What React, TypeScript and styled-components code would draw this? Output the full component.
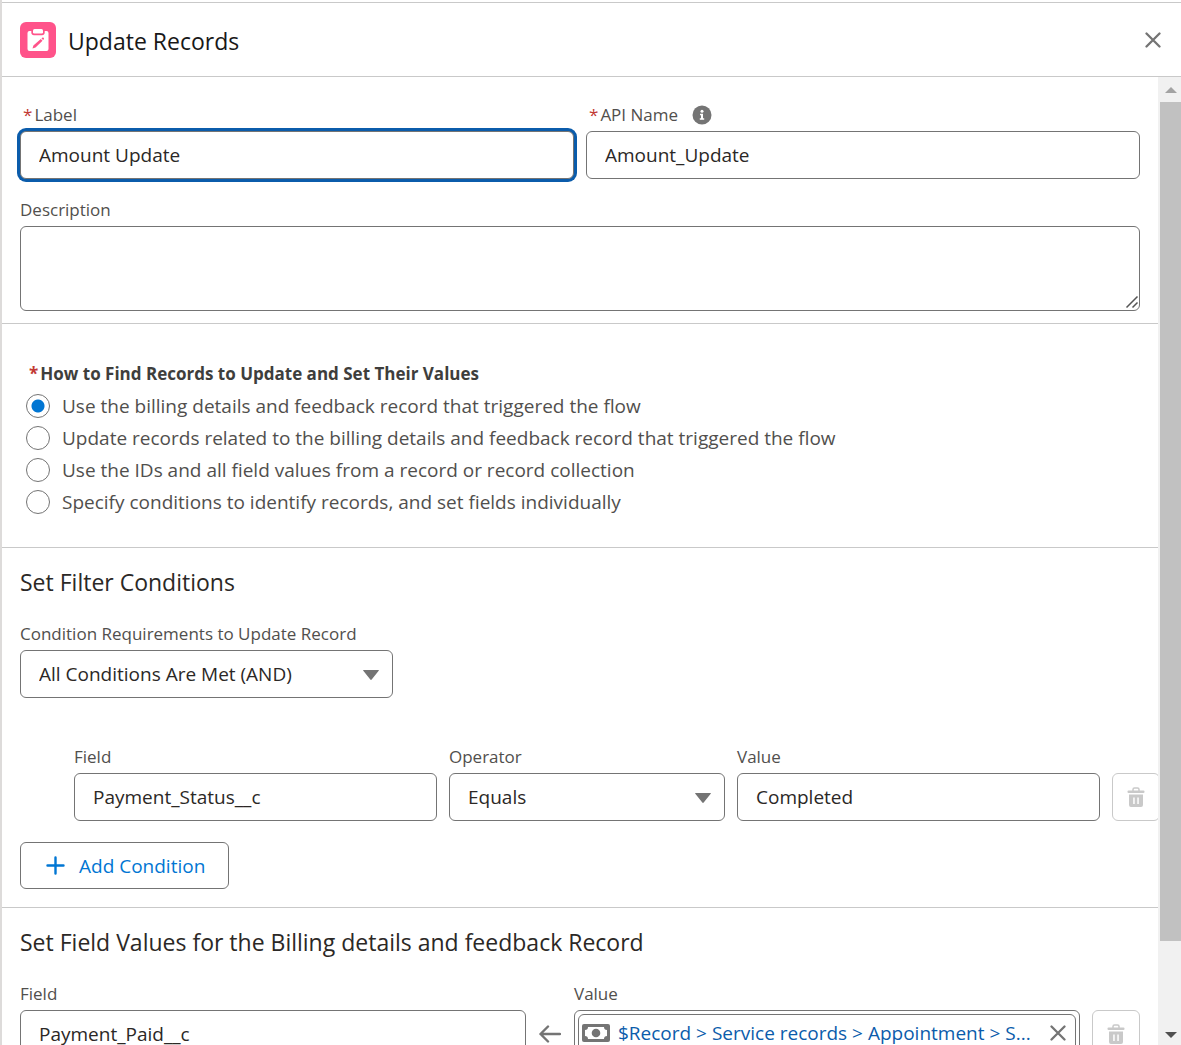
import React, { useState } from "react";
import styled, { createGlobalStyle, css } from "styled-components";

const GlobalStyle = createGlobalStyle`
  *, *::before, *::after { box-sizing: border-box; }
  body { margin: 0; background: #fff; overflow: hidden; }
  body, button, input, select, textarea {
    font-family: "Open Sans", "Noto Sans", sans-serif;
  }
`;

const Panel = styled.main`
  display: flex;
  flex-direction: column;
  height: 100vh;
  padding-top: 2px;
  border-left: 2px solid #dddbda;
  color: #444;
`;

const Header = styled.header`
  display: flex;
  align-items: center;
  gap: 12px;
  flex: none;
  height: 75px;
  padding: 0 18px;
  border-top: 1px solid #c9c9c9;
  border-bottom: 1px solid #c9c9c9;
`;

const Badge = styled.span`
  display: grid;
  place-items: center;
  width: 36px;
  height: 36px;
  border-radius: 6px;
  background: #ff538a;
`;

const Title = styled.h1`
  flex: 1;
  margin: 0;
  padding-top: 2px;
  color: #181818;
  font-size: 23px;
  line-height: 28px;
  font-weight: 400;
`;

const IconButton = styled.button`
  display: grid;
  place-items: center;
  flex: none;
  width: 20px;
  height: 24px;
  padding: 0;
  border: 0;
  background: none;
  color: #747474;
`;

const Body = styled.div`
  display: flex;
  flex: 1;
  min-height: 0;
`;

const Content = styled.form`
  flex: 1;
  min-width: 0;
  overflow-x: hidden;
  overflow-y: auto;
  scrollbar-width: none;
`;

const Section = styled.section<{ $top: number; $bottom: number }>`
  padding: ${(p) => p.$top}px 18px ${(p) => p.$bottom}px;
  border-bottom: 1px solid #c9c9c9;
`;

const Heading = styled.h2`
  margin: 0 0 27px;
  color: #2b2826;
  font-size: 23px;
  line-height: 28px;
  font-weight: 400;
`;

const TwoColumns = styled.div`
  display: grid;
  grid-template-columns: 1fr 1fr;
  gap: 12px;
  margin-bottom: 20px;
`;

const Field = styled.div`
  display: flex;
  flex-direction: column;
  gap: 5px;
  min-width: 0;
`;

const LabelRow = styled.div<{ $required?: boolean }>`
  display: flex;
  align-items: center;
  gap: 14px;
  height: 22px;
  padding-left: ${(p) => (p.$required ? 3 : 0)}px;
`;

const Label = styled.label`
  color: #514f4d;
  font-size: 17px;
  line-height: 22px;
  white-space: nowrap;
`;

const Star = styled.abbr`
  margin-right: 2px;
  color: #c23934;
  text-decoration: none;
`;

const box = css`
  width: 100%;
  border: 1px solid #747474;
  border-radius: 6px;
  background: #fff;
  color: #2b2826;
  font-size: 19px;
  outline: none;
`;

const TextInput = styled.input<{ $active?: boolean }>`
  ${box}
  height: 48px;
  padding: 0 18px;
  box-shadow: ${(p) => (p.$active ? "0 0 0 3px #0b5cab" : "none")};
`;

const Stack = styled.div<{ $width?: string }>`
  display: grid;
  width: ${(p) => p.$width ?? "100%"};
  > * { grid-area: 1 / 1; }
  > svg { pointer-events: none; }
`;

const TextArea = styled.textarea`
  ${box}
  display: block;
  height: 85px;
  padding: 10px 18px;
  resize: none;
`;

const Grip = styled.svg`
  place-self: end;
  margin: 0 1px 2px 0;
`;

const Select = styled.select`
  ${box}
  appearance: none;
  height: 48px;
  padding: 0 40px 0 18px;
`;

const Caret = styled.svg`
  place-self: center end;
  margin: 2px 14px 0 0;
`;

const RadioGroup = styled.fieldset`
  margin: 0;
  padding: 0 0 0 6px;
  border: 0;
`;

const Legend = styled.legend`
  padding: 0 0 4px 3px;
  color: #3e3e3c;
  font-size: 17px;
  line-height: 24px;
  font-weight: 700;
`;

const RadioLabel = styled.label`
  display: flex;
  align-items: center;
  gap: 12px;
  height: 32px;
  color: #514f4d;
  font-size: 19px;
  line-height: 24px;
  white-space: nowrap;
`;

const Radio = styled.input`
  appearance: none;
  flex: none;
  width: 24px;
  height: 24px;
  margin: 0;
  border: 1px solid #747474;
  border-radius: 50%;
  background: #fff;
  &:checked {
    background: radial-gradient(circle, #0176d3 0 6px, #fff 7px);
  }
`;

const ConditionRow = styled.div`
  display: grid;
  grid-template-columns: 363fr 276fr 363fr 48px;
  align-items: end;
  gap: 12px;
  margin: 48px -20px 21px 54px;
`;

const AssignmentRow = styled.div`
  display: grid;
  grid-template-columns: 1fr 48px 1fr 60px;
  align-items: end;
`;

const ArrowCell = styled.span`
  display: grid;
  place-items: center;
  height: 48px;
`;

const DeleteButton = styled.button`
  display: grid;
  place-items: center;
  justify-self: end;
  width: 48px;
  height: 48px;
  padding: 0;
  border: 1px solid #c9c9c9;
  border-radius: 6px;
  background: #fff;
  color: #c9c9c9;
`;

const AddButton = styled.button`
  display: flex;
  align-items: center;
  gap: 14px;
  height: 47px;
  padding: 0 23px 0 25px;
  border: 1px solid #747474;
  border-radius: 6px;
  background: #fff;
  color: #0176d3;
  font-size: 19px;
  line-height: 24px;
`;

const Lookup = styled.div`
  ${box}
  height: 48px;
  padding: 3px;
`;

const Pill = styled.div`
  display: flex;
  align-items: center;
  height: 40px;
  padding: 0 7px 2px 3px;
  border: 1px solid #747474;
  border-radius: 6px;
`;

const PillLink = styled.a`
  flex: 1;
  min-width: 0;
  margin-left: 8px;
  color: #0b5cab;
  font-size: 19px;
  line-height: 22px;
  text-decoration: none;
  white-space: nowrap;
`;

const ScrollRail = styled.div`
  display: flex;
  flex-direction: column;
  flex: none;
  width: 23px;
  padding-left: 2px;
  background: #f1f1f1;
`;

const RailTrack = styled.div`
  flex: 1;
`;

const RailThumb = styled.div`
  height: 91%;
  background: #c1c1c1;
`;

const RailButton = styled.button<{ $height: number }>`
  display: grid;
  place-items: center;
  width: 100%;
  height: ${(p) => p.$height}px;
  padding: 0;
  border: 0;
  background: none;
`;

const CloseIcon = () => (
  <svg width="16" height="16" viewBox="0 0 16 16" aria-hidden="true">
    <path d="M1.5 1.5l13 13M14.5 1.5l-13 13" stroke="currentColor" strokeWidth="2.3" strokeLinecap="round" />
  </svg>
);

const TrashIcon = () => (
  <svg width="18" height="20" viewBox="0 0 18 20" aria-hidden="true">
    <path d="M6 4V2.6C6 1.5 6.6 1 7.5 1h3c.9 0 1.500.5 1.500 1.600V4" fill="none" stroke="currentColor" strokeWidth="1.5" />
    <rect x="0.5" y="3.5" width="17" height="2.5" rx="1" fill="currentColor" />
    <path fillRule="evenodd" fill="currentColor" d="M2 7.500h14v10.500a2 2 0 0 1-2 2H4a2 2 0 0 1-2-2zM6.200 10.500v6.500h1.500v-6.500zM10.300 10.500v6.500h1.500v-6.500z" />
  </svg>
);

const ClipboardIcon = () => (
  <svg width="22" height="24" viewBox="0 0 22 24" aria-hidden="true">
    <path
      fill="#fff"
      d="M2.500 3h1.800v1.500A2.800 2.800 0 0 0 7 7.200h8a2.800 2.800 0 0 0 2.700-2.700V3h1.800a2 2 0 0 1 2 2v16a2 2 0 0 1-2 2h-17a2 2 0 0 1-2-2V5a2 2 0 0 1 2-2z"
    />
    <path fill="#fff" d="M7.500 1h7a1.500 1.500 0 0 1 1.500 1.500v1.700a1.300 1.300 0 0 1-1.300 1.300H7.300A1.300 1.300 0 0 1 6 4.200V2.500A1.500 1.500 0 0 1 7.500 1z" />
    <path fill="#ff538a" d="M5.500 20.500l.9-2.900 7.400-6.600 1.700 1.800-7 6.600zM14.500 10.400l.8-.7c.4-.3.900-.3 1.200 0l.3.400c.3.400.3.800 0 1.100l-.700.800z" />
  </svg>
);

const InfoIcon = () => (
  <svg width="20" height="20" viewBox="0 0 20 20" aria-hidden="true">
    <circle cx="10" cy="10" r="9.500" fill="#747474" />
    <circle cx="10" cy="6.200" r="1.500" fill="#fff" />
    <path d="M8 8.700h3v4.600h1.200v1.500H7.800v-1.500H9v-3.100H8z" fill="#fff" />
  </svg>
);

const CurrencyIcon = () => (
  <svg width="28" height="18" viewBox="0 0 28 18" aria-hidden="true">
    <rect width="28" height="18" rx="2" fill="#747474" />
    <path fill="#fff" d="M6 3h16a3 3 0 0 0 3 3v6a3 3 0 0 0-3 3H6a3 3 0 0 0-3-3V6a3 3 0 0 0 3-3z" />
    <circle cx="14" cy="9" r="4.300" fill="#747474" />
  </svg>
);

const SelectCaret = () => (
  <Caret width="16" height="10" viewBox="0 0 16 10" aria-hidden="true">
    <path d="M.6 0h14.800c.5 0 .6.400.3.800L8.700 9.500c-.4.500-1 .5-1.400 0L.3.800C0 .400.100 0 .6 0z" fill="#747474" />
  </Caret>
);

const METHODS = [
  "Use the billing details and feedback record that triggered the flow",
  "Update records related to the billing details and feedback record that triggered the flow",
  "Use the IDs and all field values from a record or record collection",
  "Specify conditions to identify records, and set fields individually",
];

interface TextFieldProps {
  id: string;
  label: string;
  value: string;
  required?: boolean;
  active?: boolean;
  extra?: React.ReactNode;
}

const TextField = ({ id, label, value, required, active, extra }: TextFieldProps) => (
  <Field>
    <LabelRow $required={required}>
      <Label htmlFor={id}>
        {required && <Star title="required">*</Star>}
        {label}
      </Label>
      {extra}
    </LabelRow>
    <TextInput id={id} type="text" defaultValue={value} $active={active} />
  </Field>
);

interface SelectFieldProps {
  id: string;
  label: string;
  options: string[];
  width?: string;
}

const SelectField = ({ id, label, options, width }: SelectFieldProps) => (
  <Field>
    <LabelRow>
      <Label htmlFor={id}>{label}</Label>
    </LabelRow>
    <Stack $width={width}>
      <Select id={id}>
        {options.map((option) => (
          <option key={option}>{option}</option>
        ))}
      </Select>
      <SelectCaret />
    </Stack>
  </Field>
);

export default function App() {
  const [method, setMethod] = useState(0);

  return (
    <>
      <GlobalStyle />
      <Panel>
        <Header>
          <Badge>
            <ClipboardIcon />
          </Badge>
          <Title>Update Records</Title>
          <IconButton type="button" aria-label="Close">
            <CloseIcon />
          </IconButton>
        </Header>
        <Body>
          <Content>
            <Section $top={27} $bottom={12}>
              <TwoColumns>
                <TextField id="label" label="Label" value="Amount Update" required active />
                <TextField
                  id="api-name"
                  label="API Name"
                  value="Amount_Update"
                  required
                  extra={<InfoIcon />}
                />
              </TwoColumns>
              <Field>
                <LabelRow>
                  <Label htmlFor="description">Description</Label>
                </LabelRow>
                <Stack>
                  <TextArea id="description" />
                  <Grip width="14" height="14" viewBox="0 0 14 14" aria-hidden="true">
                    <path d="M1.500 12.500l11-11M7.500 12.500l5-5" stroke="#555" strokeWidth="1.500" />
                  </Grip>
                </Stack>
              </Field>
            </Section>

            <Section $top={38} $bottom={29}>
              <RadioGroup>
                <Legend>
                  <Star title="required">*</Star>
                  How to Find Records to Update and Set Their Values
                </Legend>
                {METHODS.map((text, index) => (
                  <RadioLabel key={text}>
                    <Radio
                      type="radio"
                      name="method"
                      checked={method === index}
                      onChange={() => setMethod(index)}
                    />
                    {text}
                  </RadioLabel>
                ))}
              </RadioGroup>
            </Section>

            <Section $top={20} $bottom={18}>
              <Heading>Set Filter Conditions</Heading>
              <SelectField
                id="requirements"
                label="Condition Requirements to Update Record"
                options={["All Conditions Are Met (AND)"]}
                width="373px"
              />
              <ConditionRow>
                <TextField id="filter-field" label="Field" value="Payment_Status__c" />
                <SelectField id="filter-operator" label="Operator" options={["Equals"]} />
                <TextField id="filter-value" label="Value" value="Completed" />
                <DeleteButton type="button" disabled aria-label="Delete condition">
                  <TrashIcon />
                </DeleteButton>
              </ConditionRow>
              <AddButton type="button">
                <svg width="19" height="19" viewBox="0 0 19 19" aria-hidden="true">
                  <path d="M9.500 1.500v16M1.500 9.500h16" stroke="currentColor" strokeWidth="2.400" strokeLinecap="round" />
                </svg>
                Add Condition
              </AddButton>
            </Section>

            <Section $top={20} $bottom={24}>
              <Heading>Set Field Values for the Billing details and feedback Record</Heading>
              <AssignmentRow>
                <TextField id="target-field" label="Field" value="Payment_Paid__c" />
                <ArrowCell>
                  <svg width="22" height="18" viewBox="0 0 22 18" aria-hidden="true">
                    <path
                      d="M21 9H1.500M9 1.500L1.500 9 9 16.500"
                      fill="none"
                      stroke="#747474"
                      strokeWidth="2.400"
                      strokeLinecap="round"
                      strokeLinejoin="round"
                    />
                  </svg>
                </ArrowCell>
                <Field>
                  <LabelRow>
                    <Label as="span" id="source-label">Value</Label>
                  </LabelRow>
                  <Lookup role="group" aria-labelledby="source-label">
                    <Pill>
                      <CurrencyIcon />
                      <PillLink href="#">$Record &gt; Service records &gt; Appointment &gt; S...</PillLink>
                      <IconButton type="button" aria-label="Clear value">
                        <CloseIcon />
                      </IconButton>
                    </Pill>
                  </Lookup>
                </Field>
                <DeleteButton type="button" disabled aria-label="Delete field value">
                  <TrashIcon />
                </DeleteButton>
              </AssignmentRow>
            </Section>
          </Content>
          <ScrollRail>
            <RailButton type="button" $height={25} aria-label="Scroll up">
              <svg width="12" height="6" viewBox="0 0 12 6" aria-hidden="true">
                <path d="M0 6l6-6 6 6z" fill="#a3a3a3" />
              </svg>
            </RailButton>
            <RailTrack>
              <RailThumb />
            </RailTrack>
            <RailButton type="button" $height={21} aria-label="Scroll down">
              <svg width="12" height="6" viewBox="0 0 12 6" aria-hidden="true">
                <path d="M0 0l6 6 6-6z" fill="#505050" />
              </svg>
            </RailButton>
          </ScrollRail>
        </Body>
      </Panel>
    </>
  );
}
